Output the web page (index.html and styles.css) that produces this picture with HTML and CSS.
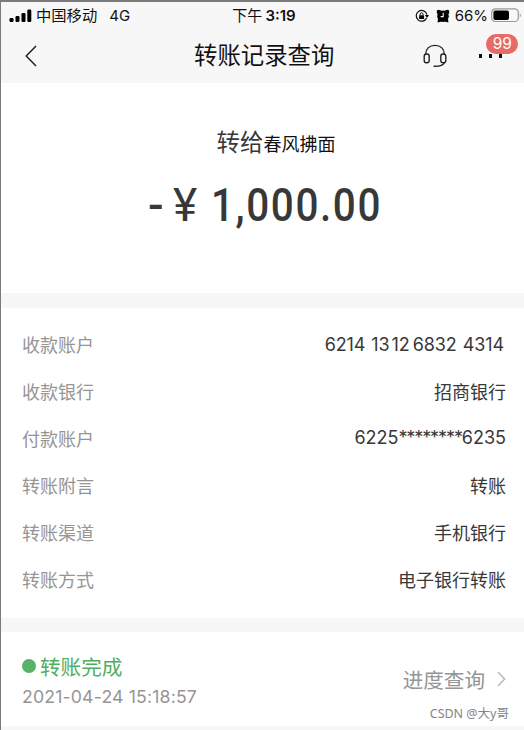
FILE: index.html
```html
<!DOCTYPE html>
<html lang="zh-CN">

<head>
  <meta charset="UTF-8">
  <meta name="viewport" content="width=device-width, initial-scale=1.0">
  <title>转账记录查询</title>
  <link rel="stylesheet" href="styles.css">
</head>

<body>
  <div class="page">
    <header class="header">
      <div class="status-bar">
        <div class="carrier">
          <svg class="signal" width="23" height="14" viewBox="0 0 23 14">
            <rect x="0.5" y="9" width="4" height="4" rx="1.2" />
            <rect x="6.5" y="7" width="4" height="6" rx="1.2" />
            <rect x="12.5" y="4" width="4" height="9" rx="1.2" />
            <rect x="18.3" y="0.5" width="4" height="12.5" rx="1.2" />
          </svg>
          <span class="carrier-name">中国移动</span>
          <span class="network">4G</span>
        </div>
        <div class="time"><span>下午</span><b>3:19</b></div>
        <div class="battery-info">
          <svg class="lock" width="14" height="14" viewBox="0 0 14 14">
            <path d="M11.6 8.9 A5.4 5.4 0 1 1 11.9 5.6" fill="none" stroke="#111" stroke-width="1.2" />
            <path d="M10 6 h4 l-2 3z" />
            <rect x="4.1" y="6.2" width="5" height="3.8" rx="0.6" />
            <path d="M5.2 6.5 V5.2 a1.4 1.4 0 0 1 2.8 0 V6.5" fill="none" stroke="#111" />
          </svg>
          <svg class="alarm" width="14" height="14" viewBox="0 0 14 14">
            <circle cx="7" cy="7.2" r="5.8" />
            <path d="M1 5.2 L0.8 1.8 L2 0.8 L5.4 1.6z M13 5.2 L13.2 1.8 L12 0.8 L8.6 1.6z M1.6 13.4 L2 9.5 L5.5 12.5z M12.4 13.4 L12 9.5 L8.5 12.5z" />
            <path d="M7.2 3.8 V7.6 H4.6" fill="none" stroke="#f7f7f7" stroke-width="1.1" />
          </svg>
          <span class="percent">66%</span>
          <svg class="battery" width="31" height="15" viewBox="0 0 31 15">
            <rect x="0.7" y="0.9" width="26.6" height="12.6" rx="3.6" fill="none" stroke="#999" stroke-width="1.2" />
            <rect x="2.4" y="2.6" width="15.6" height="9.4" rx="2" />
            <path d="M28.8 5 q2 2.3 0 4.6z" fill="#999" />
          </svg>
        </div>
      </div>
      <nav class="nav-bar">
        <svg class="back" width="12" height="22" viewBox="0 0 12 22">
          <path d="M11 1 L1.2 11 L11 21" fill="none" stroke="#222" stroke-width="1.5" />
        </svg>
        <h1>转账记录查询</h1>
        <svg class="service" width="24" height="24" viewBox="0 0 24 24">
          <g fill="none" stroke="#222" stroke-width="1.4">
            <path d="M2.6 10.6 C2.8 4.8 6.6 1.4 12 1.4 S21.2 4.8 21.4 10.6" />
            <rect x="1.2" y="10" width="5" height="8.8" rx="2.2" />
            <rect x="17.8" y="10" width="5" height="8.8" rx="2.2" />
            <path d="M21.6 18.4 C20.4 21.4 17 22.4 10.6 22.2" />
          </g>
        </svg>
        <div class="more">
          <i></i><i></i><i></i>
          <span class="badge">99</span>
        </div>
      </nav>
    </header>

    <section class="summary">
      <p class="payee">转给<span>春风拂面</span></p>
      <p class="amount"><span class="minus">-</span><span class="yen">¥</span><span class="number">1,000.00</span></p>
    </section>

    <section class="details">
      <div class="row">
        <span class="label">收款账户</span>
        <span class="value card"><span>6214</span><span>13</span><span>12</span><span>6832</span><span>4314</span></span>
      </div>
      <div class="row"><span class="label">收款银行</span><span class="value">招商银行</span></div>
      <div class="row"><span class="label">付款账户</span><span class="value">6225<span class="mask">********</span>6235</span></div>
      <div class="row"><span class="label">转账附言</span><span class="value">转账</span></div>
      <div class="row"><span class="label">转账渠道</span><span class="value">手机银行</span></div>
      <div class="row"><span class="label">转账方式</span><span class="value">电子银行转账</span></div>
    </section>

    <section class="progress">
      <div class="state">
        <p class="done"><i class="dot"></i>转账完成</p>
        <p class="date">2021-04-24 15:18:57</p>
      </div>
      <div class="query">
        <span>进度查询</span>
        <svg width="9" height="16" viewBox="0 0 9 16">
          <path d="M1 1 L7.6 8 L1 15" fill="none" stroke="#bbb" stroke-width="1.6" />
        </svg>
      </div>
      <span class="watermark">CSDN @大y哥</span>
    </section>
  </div>
</body>

</html>
```
FILE: styles.css
```css
* {
  box-sizing: border-box;
}

body {
  margin: 0;
  font-family: Inter, "Noto Sans CJK SC", sans-serif;
  background-color: #f7f7f7;
  color: #383838;
}

h1,
p {
  margin: 0;
  font-weight: normal;
}

svg {
  display: block;
  flex-shrink: 0;
}

.page {
  height: 730px;
  overflow: hidden;
  border-top: 2px solid #7b7b7b;
  border-left: 1px solid #7b7b7b;
}

.header {
  height: 81px;
  color: #111;
}

.status-bar {
  display: grid;
  grid-template-columns: 1fr auto 1fr;
  align-items: center;
  height: 27px;
  padding: 0 2px 0 8px;
  font-size: 15px;
}

.carrier,
.battery-info,
.time {
  display: flex;
  align-items: center;
}

.carrier {
  line-height: 20px;
}

.carrier-name {
  margin-left: 4px;
  font-size: 15.3px;
}

.network {
  margin-left: 12px;
}

.time {
  gap: 3px;
  padding-right: 3px;
  line-height: 20px;
}

.time b {
  font-weight: 600;
}

.battery-info {
  justify-content: flex-end;
}

.alarm {
  margin-left: 7px;
}

.percent {
  margin: 0 3px 0 5px;
}

.nav-bar {
  display: flex;
  align-items: center;
  height: 54px;
  padding: 0 19px 0 24px;
}

.nav-bar h1 {
  margin-left: 157px;
  font-size: 23.4px;
  line-height: 54px;
}

.service {
  margin-left: 89px;
}

.more {
  position: relative;
  display: flex;
  gap: 7px;
  margin-left: 32px;
}

.more i {
  width: 3px;
  height: 4px;
  background-color: #111;
}

.badge {
  position: absolute;
  left: 7px;
  top: -20px;
  width: 32px;
  height: 20px;
  border-radius: 10px;
  background-color: #e66a66;
  color: #fff;
  font-size: 15.5px;
  line-height: 20px;
  text-align: center;
}

.summary {
  height: 210px;
  padding-top: 42px;
  background-color: #fff;
}

.payee {
  display: flex;
  justify-content: center;
  align-items: baseline;
  height: 36px;
  padding: 0 1px 0 28px;
  font-size: 23.4px;
  line-height: 36px;
}

.payee span {
  color: #111;
  font-size: 18px;
}

.amount {
  display: flex;
  height: 60px;
  padding: 14px 0 0 147px;
  font-family: Roboto, sans-serif;
  font-size: 46px;
  font-weight: 500;
  line-height: 60px;
}

.minus {
  width: 25px;
}

.yen {
  width: 38px;
  font-weight: 400;
}

.number {
  letter-spacing: 1.8px;
  transform: scaleX(0.88);
  transform-origin: left;
}

.details {
  height: 310px;
  margin-top: 15px;
  padding: 12px 18px 0 21px;
  background-color: #fff;
}

.row {
  display: flex;
  justify-content: space-between;
  align-items: center;
  height: 47px;
  font-size: 18px;
}

.label {
  color: #959595;
}

.card {
  display: flex;
  padding-top: 2px;
  padding-right: 2px;
  gap: 6px;
  letter-spacing: -0.1px;
}

.card span:nth-child(3) {
  margin-left: -4px;
}

.card span:nth-child(4) {
  margin-left: -3px;
}

.mask {
  letter-spacing: -1.1px;
}

.progress {
  position: relative;
  display: flex;
  justify-content: space-between;
  height: 94px;
  margin-top: 14px;
  padding: 19px 18px 0 21px;
  background-color: #fff;
}

.done {
  display: flex;
  align-items: center;
  height: 30px;
  color: #50ae61;
  font-size: 20.6px;
}

.dot {
  width: 14px;
  height: 14px;
  margin-right: 4px;
  border-radius: 50%;
  background-color: #58b368;
}

.date {
  color: #959595;
  font-size: 17.7px;
  letter-spacing: 0.15px;
  line-height: 32px;
}

.query {
  display: flex;
  align-items: center;
  gap: 12px;
  height: 56px;
  color: #959595;
  font-size: 20.6px;
}

.watermark {
  position: absolute;
  right: 15px;
  bottom: 3px;
  color: #858585;
  font-family: "Noto Sans", "Noto Sans CJK SC", sans-serif;
  font-size: 12.5px;
  line-height: 18px;
}
```
